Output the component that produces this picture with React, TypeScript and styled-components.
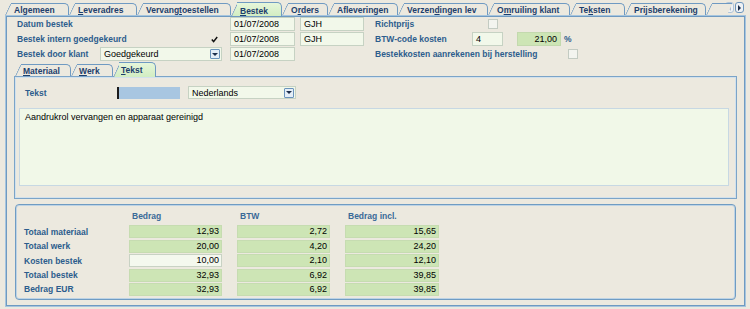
import React from 'react';
import styled, { createGlobalStyle } from 'styled-components';

const Global = createGlobalStyle`
  html, body { margin: 0; padding: 0; background: #ECE9DF; }
  body { font-family: "Liberation Sans", Arial, sans-serif; font-size: 9px; color: #000; }
  * { box-sizing: border-box; }
`;

const BLUE = '#6F9AC2';
const LABEL = '#2C5D8D';
const FIELD = '#F2F8EA';
const FIELD_BORDER = '#C6D2C3';
const GREEN = '#CDE5B5';

const Screen = styled.div`
  width: 750px;
  height: 309px;
  padding: 0 4px;
  display: flex;
  flex-direction: column;
  overflow: hidden;
`;

const TabStrip = styled.div<{ $inner?: boolean }>`
  position: relative;
  z-index: 2;
  display: flex;
  align-items: flex-end;
  height: 15px;
  flex: none;
  padding-left: ${p => (p.$inner ? 9 : 1)}px;
`;

const Tab = styled.div<{ $w: number; $active?: boolean; $inner?: boolean; $cut?: boolean }>`
  position: relative;
  isolation: isolate;
  flex: none;
  width: ${p => p.$w}px;
  height: ${p => (p.$active ? (p.$inner ? 15 : 14) : 12)}px;
  margin-bottom: ${p => (p.$active ? -1 : 0)}px;
  padding-left: ${p => (p.$inner ? 8 : 9)}px;
  padding-top: ${p => (p.$active ? (p.$inner ? 3 : 4) : 2)}px;
  font-weight: bold;
  font-size: 8.5px;
  line-height: 10px;
  color: #1D3E6C;
  white-space: nowrap;
  &::before {
    content: '';
    position: absolute;
    z-index: -1;
    left: 0;
    top: 0;
    bottom: 0;
    width: 20px;
    border-left: 1px solid ${BLUE};
    border-top: 1px solid ${BLUE};
    border-top-left-radius: 3px;
    background: ${p => (p.$active ? 'linear-gradient(#E6F6DA, #D2EDC2)' : '#ECE9DF')};
    transform: skewX(-25deg);
    transform-origin: bottom left;
  }
  &::after {
    content: '';
    position: absolute;
    z-index: -1;
    left: 6px;
    right: 0;
    top: 0;
    bottom: 0;
    border-top: 1px solid ${BLUE};
    border-right: ${p => (p.$cut ? 'none' : `1px solid ${BLUE}`)};
    border-top-right-radius: ${p => (p.$cut ? 0 : 5)}px;
    background: ${p => (p.$active ? 'linear-gradient(#E6F6DA, #D2EDC2)' : '#ECE9DF')};
  }
`;

const Acc = styled.span`
  text-decoration: underline;
`;

const ScrollButtons = styled.div`
  display: flex;
  gap: 1px;
  margin-left: auto;
  margin-right: 2px;
  align-self: flex-start;
  margin-top: 2px;
`;

const ScrollBtn = styled.div<{ $disabled?: boolean }>`
  width: 9px;
  height: 11px;
  border: 1px solid ${p => (p.$disabled ? '#AFC4D8' : '#6E96BD')};
  border-radius: 3px;
  background: #EEF2F5;
  display: flex;
  align-items: center;
  justify-content: center;
`;

const Panel = styled.div`
  flex: 1;
  margin: 0 0 2px 1px;
  border: 1px solid #A6C5DE;
  box-shadow: inset 0 0 0 1px #6F9AC1;
  display: flex;
  flex-direction: column;
`;

const Form = styled.div`
  display: flex;
  flex-direction: column;
  gap: 1px;
  padding: 1px 0 0 11px;
`;

const FormRow = styled.div`
  display: flex;
  align-items: center;
  height: 14px;
`;

const Label = styled.div<{ $w?: number }>`
  width: ${p => (p.$w ? `${p.$w}px` : 'auto')};
  flex: none;
  font-weight: bold;
  font-size: 8.5px;
  color: ${LABEL};
  white-space: nowrap;
`;

const Mid = styled.div`
  width: 122px;
  height: 14px;
  flex: none;
  display: flex;
  align-items: center;
  justify-content: flex-end;
  padding-right: 4px;
`;

const Field = styled.div<{ $w: number; $ml?: number; $green?: boolean; $right?: boolean }>`
  width: ${p => p.$w}px;
  height: 14px;
  flex: none;
  margin-left: ${p => p.$ml ?? 0}px;
  background: ${p => (p.$green ? GREEN : FIELD)};
  border: 1px solid ${p => (p.$green ? '#C3D9AE' : FIELD_BORDER)};
  padding: 0 3px;
  line-height: 12px;
  text-align: ${p => (p.$right ? 'right' : 'left')};
  white-space: nowrap;
`;

const Spacer = styled.div<{ $w: number }>`
  width: ${p => p.$w}px;
  flex: none;
`;

const Select = styled.div<{ $w: number; $h: number; $ml?: number }>`
  width: ${p => p.$w}px;
  height: ${p => p.$h}px;
  margin-left: ${p => p.$ml ?? 0}px;
  flex: none;
  display: flex;
  align-items: center;
  justify-content: space-between;
  background: ${FIELD};
  border: 1px solid ${FIELD_BORDER};
  padding: 0 1px 0 3px;
`;

const DropBtn = styled.div`
  width: 10px;
  height: 10px;
  border: 1px solid #6A93BC;
  border-radius: 1px;
  background: #E4EEF7;
  display: flex;
  align-items: center;
  justify-content: center;
`;

const Check = styled.div`
  width: 10px;
  height: 10px;
  flex: none;
  background: #F3F4EF;
  border: 1px solid #C3CBC2;
`;

const Right = styled.div`
  display: flex;
  align-items: center;
  margin-left: 11px;
`;

const Percent = styled.span`
  margin-left: 3px;
  font-weight: bold;
  font-size: 8.5px;
  color: ${LABEL};
`;

const InnerPanel = styled.div`
  margin: 0 8px 0 8px;
  height: 123px;
  flex: none;
  border: 1px solid #7BA4C8;
  box-shadow: inset 0 0 0 1px #D2E1EC;
  padding: 9px 7px 0 4px;
  display: flex;
  flex-direction: column;
`;

const TextRow = styled.div`
  display: flex;
  align-items: center;
  height: 13px;
  padding-left: 6px;
`;

const BlueInput = styled.div`
  width: 63px;
  height: 12px;
  flex: none;
  background: #A8C6E1;
  border-left: 2px solid #1B1B1B;
`;

const TextArea = styled.div`
  margin-top: 9px;
  height: 78px;
  background: #F1F8E8;
  border: 1px solid #C7D8E3;
  padding: 3px 5px;
  line-height: 11px;
`;

const Group = styled.div`
  margin: 5px 9px 0 9px;
  height: 96px;
  flex: none;
  border: 1px solid #6F9CC3;
  box-shadow: inset 0 0 0 1px #BDD3E5;
  border-radius: 4px;
  padding: 6px 0 0 8px;
  display: grid;
  grid-template-columns: 90px 93px 93px 94px;
  grid-template-rows: repeat(6, 13px);
  column-gap: 15px;
  row-gap: 1.4px;
`;

const Head = styled.div`
  align-self: start;
  line-height: 10px;
  padding-left: 3px;
  font-weight: bold;
  font-size: 8.5px;
  color: #3A6A98;
`;

const RowLabel = styled.div`
  display: flex;
  align-items: center;
  font-weight: bold;
  font-size: 8.5px;
  color: ${LABEL};
  white-space: nowrap;
`;

const Cell = styled.div<{ $light?: boolean }>`
  background: ${p => (p.$light ? '#F4F8EE' : GREEN)};
  border: 1px solid ${p => (p.$light ? '#C8D2C4' : '#C6DCB1')};
  text-align: right;
  padding-right: 2px;
  line-height: 11px;
`;

const Tri = ({ dir, color }: { dir: 'down' | 'left' | 'right'; color: string }) => {
  const pts = dir === 'down' ? '0,1 6,1 3,4' : dir === 'left' ? '4,0 4,6 1,3' : '1,0 1,6 4,3';
  const w = dir === 'down' ? 6 : 5;
  const h = dir === 'down' ? 5 : 6;
  return (
    <svg width={w} height={h} viewBox={`0 0 ${w} ${h}`}>
      <polygon points={pts} fill={color} />
    </svg>
  );
};

const TabText = ({ label, u }: { label: string; u?: number }) =>
  u === undefined ? (
    <>{label}</>
  ) : (
    <>
      {label.slice(0, u)}
      <Acc>{label[u]}</Acc>
      {label.slice(u + 1)}
    </>
  );

const tabs: { label: string; w: number; u?: number; active?: boolean }[] = [
  { label: 'Algemeen', w: 64 },
  { label: 'Leveradres', w: 68, u: 0 },
  { label: 'Vervangtoestellen', w: 94, u: 7 },
  { label: 'Bestek', w: 51, u: 0, active: true },
  { label: 'Orders', w: 46, u: 1 },
  { label: 'Afleveringen', w: 70 },
  { label: 'Verzendingen lev', w: 90, u: 6 },
  { label: 'Omruiling klant', w: 82, u: 1 },
  { label: 'Teksten', w: 55, u: 2 },
  { label: 'Prijsberekening', w: 81 },
];

const innerTabs = [
  { label: 'Materiaal', w: 56, u: 0 },
  { label: 'Werk', w: 42, u: 0 },
  { label: 'Tekst', w: 43, u: 0, active: true },
];

const totals = [
  { label: 'Totaal materiaal', v: ['12,93', '2,72', '15,65'] },
  { label: 'Totaal werk', v: ['20,00', '4,20', '24,20'] },
  { label: 'Kosten bestek', v: ['10,00', '2,10', '12,10'], light: true },
  { label: 'Totaal bestek', v: ['32,93', '6,92', '39,85'] },
  { label: 'Bedrag EUR', v: ['32,93', '6,92', '39,85'] },
];

const CheckMark = () => (
  <svg width="7" height="7" viewBox="0 0 7 7">
    <polyline points="0.8,3.6 2.6,5.6 6.2,1" fill="none" stroke="#111" strokeWidth="1.5" />
  </svg>
);

export default function App() {
  return (
    <>
      <Global />
      <Screen>
        <TabStrip>
          {tabs.map(t => (
            <Tab key={t.label} $w={t.w} $active={t.active}>
              <TabText label={t.label} u={t.u} />
            </Tab>
          ))}
          <Tab $w={13} $cut />
          <ScrollButtons>
            <ScrollBtn $disabled>
              <Tri dir="left" color="#AEBBCB" />
            </ScrollBtn>
            <ScrollBtn>
              <Tri dir="right" color="#1C2F4C" />
            </ScrollBtn>
          </ScrollButtons>
        </TabStrip>
        <Panel>
          <Form>
            <FormRow>
              <Label $w={83}>Datum bestek</Label>
              <Mid />
              <Field $w={65} $ml={8}>01/07/2008</Field>
              <Field $w={64} $ml={5}>GJH</Field>
              <Right>
                <Label $w={113}>Richtprijs</Label>
                <Check />
              </Right>
            </FormRow>
            <FormRow>
              <Label $w={83}>Bestek intern goedgekeurd</Label>
              <Mid>
                <CheckMark />
              </Mid>
              <Field $w={65} $ml={8}>01/07/2008</Field>
              <Field $w={64} $ml={5}>GJH</Field>
              <Right>
                <Label $w={97}>BTW-code kosten</Label>
                <Field $w={31}>4</Field>
                <Field $w={44} $ml={14} $green $right>21,00</Field>
                <Percent>%</Percent>
              </Right>
            </FormRow>
            <FormRow>
              <Label $w={83}>Bestek door klant</Label>
              <Select $w={122} $h={14}>
                <span>Goedgekeurd</span>
                <DropBtn>
                  <Tri dir="down" color="#1C2F4C" />
                </DropBtn>
              </Select>
              <Field $w={65} $ml={8}>01/07/2008</Field>
              <Spacer $w={69} />
              <Right>
                <Label $w={193}>Bestekkosten aanrekenen bij herstelling</Label>
                <Check />
              </Right>
            </FormRow>
          </Form>
          <TabStrip $inner>
            {innerTabs.map(t => (
              <Tab key={t.label} $w={t.w} $active={t.active} $inner>
                <TabText label={t.label} u={t.u} />
              </Tab>
            ))}
          </TabStrip>
          <InnerPanel>
            <TextRow>
              <Label $w={92}>Tekst</Label>
              <BlueInput />
              <Select $w={108} $h={13} $ml={8}>
                <span>Nederlands</span>
                <DropBtn>
                  <Tri dir="down" color="#1C2F4C" />
                </DropBtn>
              </Select>
            </TextRow>
            <TextArea>Aandrukrol vervangen en apparaat gereinigd</TextArea>
          </InnerPanel>
          <Group>
            <div />
            <Head>Bedrag</Head>
            <Head>BTW</Head>
            <Head>Bedrag incl.</Head>
            {totals.map(r => (
              <React.Fragment key={r.label}>
                <RowLabel>{r.label}</RowLabel>
                {r.v.map((v, i) => (
                  <Cell key={i} $light={r.light && i === 0}>
                    {v}
                  </Cell>
                ))}
              </React.Fragment>
            ))}
          </Group>
        </Panel>
      </Screen>
    </>
  );
}
